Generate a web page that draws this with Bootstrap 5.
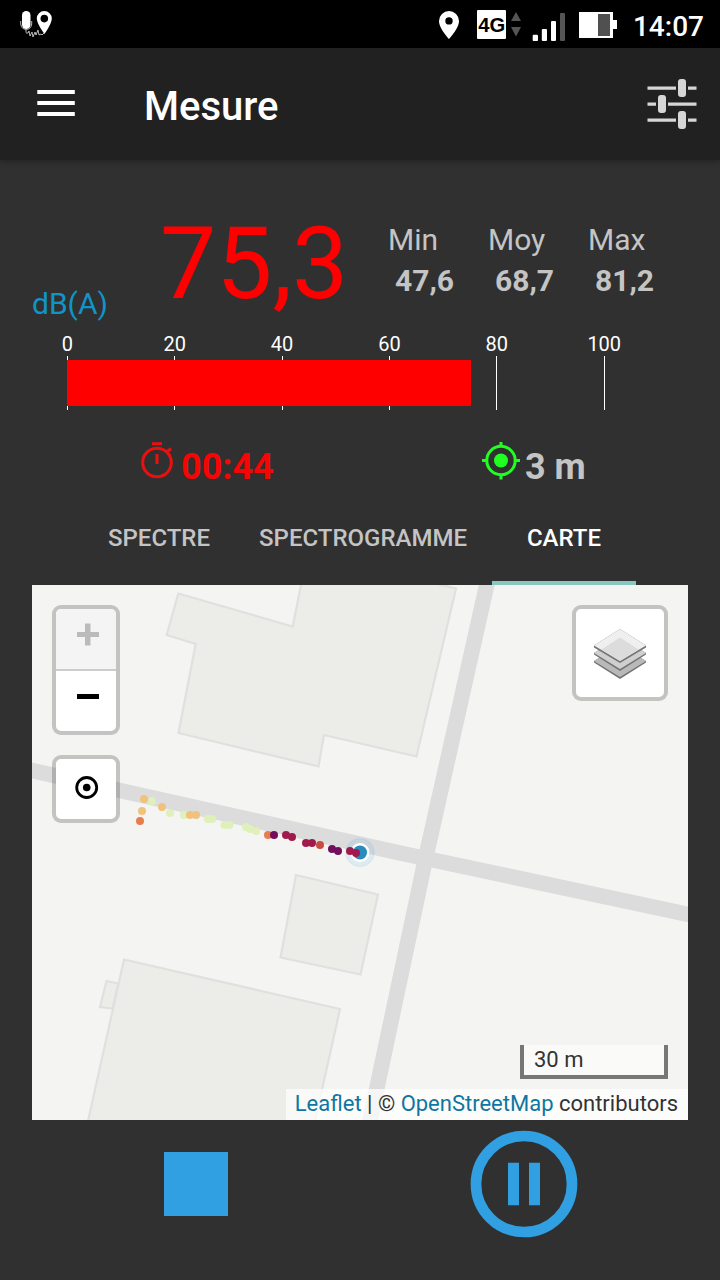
<!DOCTYPE html>
<html lang="fr">
<head>
<meta charset="utf-8">
<meta name="viewport" content="width=device-width, initial-scale=1">
<title>Mesure</title>
<link rel="stylesheet" href="https://cdn.jsdelivr.net/npm/bootstrap@5.3.0/dist/css/bootstrap.min.css">
<style>
body{font-family:Roboto,"Noto Sans",sans-serif;background:#303030;color:#c4c4c4;width:720px;height:1280px;overflow:hidden}
svg{display:block;flex:none}
.statusbar{height:48px;background:#000;padding:0 16px 0 20px}
.clock{font-size:28px;line-height:48px;color:#fff;font-weight:500;margin-left:16px;padding-top:6px}
.appbar{height:112px;background:#212121;padding:0 22px 0 37px;box-shadow:0 1px 6px rgba(0,0,0,.35)}
.appbar h1{font-size:40px;line-height:50px;font-weight:500;color:#fff;margin:6px 0 0 67px}
.readout{height:108px;margin-top:54px;padding-left:32px}
.unit{width:128px;font-size:30px;line-height:36px;color:#1294c8}
.level{width:228px;font-size:100px;line-height:100px;color:red}
.stats{padding-top:5px;font-size:30px;line-height:41px}
.stats div{width:100px}
.stats b{padding-left:7px;font-weight:700;display:block}
.gauge{margin:11px 0 0 13.6px;width:645px}
.gauge-labels{font-size:20px;line-height:22px;color:#fff;height:23px}
.gauge-labels span,.tick{width:107.4px;text-align:center}
.gauge-plot{display:grid;height:54px}
.gauge-plot>*{grid-area:1/1}
.tick i{display:block;width:1px;height:54px;background:#fff;margin:0 auto}
.level-track{width:536.6px;height:46px;margin:4px 0 0 53.2px}
.level-bar{height:46px;background:red}
.infos{height:70px;margin-top:30px;font-size:36px;line-height:54px;font-weight:700}
.timer{width:341px;margin-left:141px;color:#f60505}
.tabs{height:75px;margin-left:84px;gap:1px;font-size:24px;font-weight:500}
.tabs a{color:#c4c4c4;text-decoration:none;padding:10px 24px 0;line-height:36px;height:75px}
.tabs a.active{color:#fff;width:144px;text-align:center;border-bottom:4px solid #88c6c0}
.mapview{width:656px;height:535px;margin-left:32px;position:relative;background:#f4f4f2;color:#333;font-size:22px}
.ctl{border:4px solid rgba(0,0,0,.2);border-radius:9px;background:#fff;background-clip:padding-box;width:68px}
.ctl .zoom-in{height:62px;background:#f4f4f4;border-bottom:2px solid #ccc;border-radius:5px 5px 0 0}
.ctl .zoom-out{height:60px}
.left-ctls{position:absolute;left:20px;top:20px;gap:20px}
.layers{position:absolute;right:20px;top:20px;width:96px;height:96px}
.mapscale{position:absolute;right:20px;bottom:41px;width:148px;height:34px;border:4px solid #777;border-top:0;background:rgba(255,255,255,.5);padding-left:10px;line-height:29px}
.attrib{position:absolute;right:0;bottom:0;width:402px;height:31px;line-height:29px;background:rgba(255,255,255,.7);text-align:right;padding-right:10px;white-space:nowrap}
.attrib a{color:#0e76a0;text-decoration:none}
.actions{height:128px;margin:0 32px}
.stopbtn{width:64px;height:64px;background:#30a0e2;border:0}
.pausebtn{background:none;border:0;padding:0}
</style>
</head>
<body>
<header>
  <div class="statusbar d-flex align-items-center">
    <svg width="34" height="32" viewBox="20 8 34 32" class="me-auto">
      <rect x="22" y="11" width="8.500" height="18" rx="4.200" fill="#fff"/>
      <path d="M20.700 21v3q.5 5 5.500 5.500q5-.5 5.500-5.500v-3M26 29.500v3" fill="none" stroke="#bbb"/>
      <path d="M26 33h2l1-2 1 5 2-4 1 5 2-5 1 3 2-5 1 5 2-1 1 1 2-2" fill="none" stroke="#ccc" stroke-width=".9"/>
      <path fill-rule="evenodd" fill="#fff" d="M44.300 11a7.500 7.500 0 0 1 7.500 7.500C51.800 24 44.500 34 44.500 34S36.800 24 36.800 18.500a7.500 7.500 0 0 1 7.500-7.500zm0 3.800a3.800 3.800 0 1 0 0 7.600a3.800 3.800 0 0 0 0-7.600z"/>
    </svg>
    <svg width="180" height="40" viewBox="437 4 180 40">
      <path fill-rule="evenodd" fill="#fff" d="M449 11a10 10 0 0 1 10 10C459 28.500 449 39 449 39S439 28.500 439 21a10 10 0 0 1 10-10zm0 6.200a3.700 3.700 0 1 0 0 7.400a3.700 3.700 0 0 0 0-7.400z"/>
      <rect x="477" y="10" width="29" height="29" rx="1" fill="#fff"/>
      <text x="491.800" y="32" text-anchor="middle" font-family="Liberation Sans" font-weight="700" font-size="19.500" textLength="27" lengthAdjust="spacingAndGlyphs" fill="#000">4G</text>
      <path d="M511 21l5-9 5 9zM511 27l5 9.500 5-9.500z" fill="#555"/>
      <g fill="#fff"><rect x="532.700" y="34.700" width="5.300" height="6.300" rx="1"/><rect x="541.800" y="29" width="5.200" height="12" rx="1"/><rect x="551" y="21" width="5" height="20" rx="1"/></g>
      <rect x="560" y="13" width="5" height="28" rx="1" fill="#555"/>
      <path d="M579 12h34v8h4v9h-4v9h-34z" fill="#fff"/><path d="M598 14h12v22h-12z" fill="#505050"/>
    </svg>
    <span class="clock">14:07</span>
  </div>
  <nav class="appbar d-flex align-items-center">
    <svg width="40" height="28" viewBox="37 90 40 28"><path d="M37.300 90h37.500v4H37.300zM37.300 101h37.500v4H37.300zM37.300 112h37.500v4H37.300z" fill="#fff"/></svg>
    <h1>Mesure</h1>
    <svg class="ms-auto" width="52" height="52" viewBox="646 78 52 52" fill="#d6d6d6"><path d="M647.500 86.500h28.500v3.200h-28.500zM688 86.500h8.500v3.200H688zM647.500 102.500h8.500v3.200h-8.500zM668 102.500h28.500v3.200H668zM647.500 118.500h28.500v3.200h-28.500zM688 118.500h8.500v3.200H688z"/><rect x="678" y="79" width="8" height="18" rx="3"/><rect x="658" y="95" width="8" height="18" rx="3"/><rect x="678" y="111" width="8" height="18" rx="3"/></svg>
  </nav>
</header>
<main>
  <section class="readout d-flex">
    <div class="unit align-self-end">dB(A)</div>
    <div class="level">75,3</div>
    <div class="stats d-flex">
      <div>Min<b>47,6</b></div><div>Moy<b>68,7</b></div><div>Max<b>81,2</b></div>
    </div>
  </section>
  <section class="gauge">
    <div class="gauge-labels d-flex"><span>0</span><span>20</span><span>40</span><span>60</span><span>80</span><span>100</span></div>
    <div class="gauge-plot">
      <div class="d-flex"><div class="tick"><i></i></div><div class="tick"><i></i></div><div class="tick"><i></i></div><div class="tick"><i></i></div><div class="tick"><i></i></div><div class="tick"><i></i></div></div>
      <div class="level-track"><div class="level-bar" style="width:75.3%"></div></div>
    </div>
  </section>
  <section class="infos d-flex">
    <div class="timer d-flex">
      <svg width="40" height="40" viewBox="141 440 40 40" fill="none" stroke="#ea1010" stroke-width="3"><circle cx="157" cy="462.500" r="14.300"/><path d="M152 443.700h10M157 454v10M167 452l4-3.500"/></svg>
      <span>00:44</span>
    </div>
    <div class="d-flex">
      <svg width="43" height="40" viewBox="482 440 43 40" fill="none" stroke="#20ff20" stroke-width="3"><circle cx="501" cy="460.500" r="14.200"/><circle cx="501" cy="460.500" r="7" fill="#20ff20" stroke="none"/><path d="M501 442v5M501 474v5.500M482 460.500h5M515 460.500h5"/></svg>
      <span>3 m</span>
    </div>
  </section>
  <nav class="tabs d-flex"><a href="#">SPECTRE</a><a href="#">SPECTROGRAMME</a><a href="#" class="active">CARTE</a></nav>
  <section class="mapview">
    <svg width="656" height="535" viewBox="32 585 656 535">
      <g fill="#ecede8" stroke="#e0e0df" stroke-width="2.200">
        <path d="M178.300 593.500L292.700 626.500L303 575L400 575L456 588.500L416.500 756.500L324 735L318.500 766.500L178.500 733L195.700 644L166.700 635z"/>
        <path d="M296 875l82 19.500-17.500 80-80-17z"/>
        <path d="M106.500 981l12 2.500-6 25-12.500-1.500z"/>
        <path d="M124 959.500l216 49.500L313 1130H86z"/>
      </g>
      <g stroke="#dcdcdc" stroke-width="15.500" fill="none"><path d="M22 768.300L120 790.500L400 853L698 916.500"/><path d="M489 575L425 861L368 1130"/></g>
      <circle cx="360" cy="852.500" r="14" fill="#2a93ee" fill-opacity=".1" stroke="#2a93ee" stroke-opacity=".06" stroke-width="2"/>
      <circle cx="360" cy="852.500" r="8" fill="#2a8bbd" stroke="#fff" stroke-width="3"/>
      <circle cx="360" cy="852.500" r="7" fill="#2a8bbd"/>
      <g fill="#dff0ba"><circle cx="152" cy="801" r="4"/><circle cx="170" cy="813" r="4"/><circle cx="184" cy="815" r="4"/><circle cx="208" cy="819" r="4"/><circle cx="212" cy="819" r="4"/><circle cx="224.500" cy="825" r="4"/><circle cx="229.500" cy="825" r="4"/><circle cx="246" cy="827" r="4"/><circle cx="250" cy="829" r="4"/><circle cx="256" cy="831" r="4"/></g>
      <g fill="#f0c27e"><circle cx="144" cy="799" r="4"/><circle cx="142" cy="811" r="4"/><circle cx="162" cy="807" r="4"/><circle cx="190" cy="815" r="4"/><circle cx="196" cy="815" r="4"/></g>
      <g fill="#e77d4c"><circle cx="140" cy="821" r="4"/><circle cx="268" cy="835" r="4"/></g>
      <g fill="#710f5b"><circle cx="274" cy="835" r="4"/><circle cx="332" cy="849" r="4"/><circle cx="338" cy="851" r="4"/></g>
      <g fill="#a01b4d"><circle cx="286" cy="835" r="4"/><circle cx="292" cy="837" r="4"/><circle cx="306" cy="843" r="4"/><circle cx="312" cy="843" r="4"/><circle cx="350" cy="851" r="4"/><circle cx="356" cy="853" r="4"/></g>
      <circle cx="320" cy="845" r="4" fill="#cd4a3e"/>
    </svg>
    <div class="left-ctls d-flex flex-column">
      <div class="ctl">
        <div class="zoom-in"><svg width="60" height="60" viewBox="56 609 60 60"><path d="M77 632h8v-8.500h5.500v8.500H99v5h-8.500v8.500H85V637h-8z" fill="#bbb"/></svg></div>
        <div class="zoom-out"><svg width="60" height="59" viewBox="56 671 60 59"><path d="M77 694h22v5H77z" fill="#000"/></svg></div>
      </div>
      <div class="ctl"><svg width="60" height="60" viewBox="56 759 60 60"><circle cx="86.700" cy="787.500" r="10" fill="none" stroke="#000" stroke-width="2.800"/><circle cx="86.700" cy="787.500" r="3.800"/></svg></div>
    </div>
    <div class="ctl layers"><svg width="88" height="88" viewBox="576 609 88 88">
      <path d="M594 661l26-16 26 16v1.500l-26 16.500-26-16.500z" fill="#747474"/><path d="M594 661l26-16 26 16-26 16z" fill="#b9b9b9"/>
      <path d="M594 653l26-16 26 16v1.500L620 671l-26-16.500z" fill="#747474"/><path d="M594 653l26-16 26 16-26 16z" fill="#cfcfcf"/>
      <path d="M594 645.500l26-16.500 26 16.500v2L620 663l-26-15.500z" fill="#747474"/><path d="M594 645.500l26-16.500 26 16.500-26 15.500z" fill="#efefef"/>
      <path d="M601.500 649.500L620 637.500l18.500 12L620 661z" fill="#dcdcdc"/>
    </svg></div>
    <div class="mapscale">30 m</div>
    <div class="attrib"><a href="#">Leaflet</a> | © <a href="#">OpenStreetMap</a> contributors</div>
  </section>
  <section class="actions row gx-0 align-items-center">
    <div class="col-6 d-flex justify-content-center"><button class="stopbtn" aria-label="Stop"></button></div>
    <div class="col-6 d-flex justify-content-center"><button class="pausebtn" aria-label="Pause"><svg width="108" height="108" viewBox="0 0 108 108"><circle cx="54" cy="54" r="48" fill="none" stroke="#30a0e2" stroke-width="10.700"/><path d="M38 32.700h11v42.600H38zM59 32.700h11v42.600H59z" fill="#30a0e2"/></svg></button></div>
  </section>
</main>
<script src="https://cdn.jsdelivr.net/npm/bootstrap@5.3.0/dist/js/bootstrap.bundle.min.js"></script>
</body>
</html>
